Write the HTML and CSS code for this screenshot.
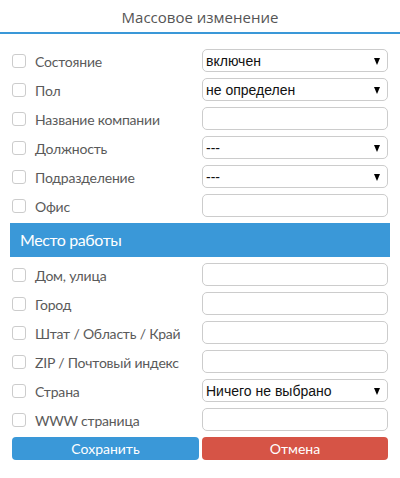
FILE: index.html
```html
<!DOCTYPE html>
<html lang="ru">
<head>
  <meta charset="UTF-8">
  <title>Массовое изменение</title>
  <link rel="stylesheet" href="styles.css">
</head>
<body>
  <h2 class="title">Массовое изменение</h2>

  <form class="form">
    <div class="row">
      <label class="lbl"><span class="check"></span>Состояние</label>
      <div class="sel"><select><option>включен</option></select></div>
    </div>
    <div class="row">
      <label class="lbl"><span class="check"></span>Пол</label>
      <div class="sel"><select><option>не определен</option></select></div>
    </div>
    <div class="row">
      <label class="lbl"><span class="check"></span>Название компании</label>
      <input class="txt" type="text">
    </div>
    <div class="row">
      <label class="lbl"><span class="check"></span>Должность</label>
      <div class="sel"><select><option>---</option></select></div>
    </div>
    <div class="row">
      <label class="lbl"><span class="check"></span>Подразделение</label>
      <div class="sel"><select><option>---</option></select></div>
    </div>
    <div class="row">
      <label class="lbl"><span class="check"></span>Офис</label>
      <input class="txt" type="text">
    </div>

    <h3 class="section">Место работы</h3>

    <div class="row">
      <label class="lbl"><span class="check"></span>Дом, улица</label>
      <input class="txt" type="text">
    </div>
    <div class="row">
      <label class="lbl"><span class="check"></span>Город</label>
      <input class="txt" type="text">
    </div>
    <div class="row">
      <label class="lbl"><span class="check"></span>Штат / Область / Край</label>
      <input class="txt" type="text">
    </div>
    <div class="row">
      <label class="lbl"><span class="check"></span>ZIP / Почтовый индекс</label>
      <input class="txt" type="text">
    </div>
    <div class="row">
      <label class="lbl"><span class="check"></span>Страна</label>
      <div class="sel"><select><option>Ничего не выбрано</option></select></div>
    </div>
    <div class="row">
      <label class="lbl"><span class="check"></span>WWW страница</label>
      <input class="txt" type="text">
    </div>

    <div class="buttons">
      <button type="button" class="btn save">Сохранить</button>
      <button type="button" class="btn cancel">Отмена</button>
    </div>
  </form>
</body>
</html>
```

FILE: styles.css
```css
body { margin: 0; background: #fff; font-family: Lato, "Open Sans", sans-serif; color: #555; }
.title { margin: 0; height: 32px; line-height: 35px; text-align: center; font-family: "Open Sans", sans-serif; font-size: 15px; font-weight: normal; color: #555; border-bottom: 2px solid #3a98d8; }
.form { padding: 15px 12px 0 12px; }
.row { display: grid; grid-template-columns: 190px 186px; height: 22px; margin-bottom: 7px; align-items: center; }
.lbl { display: flex; align-items: center; font-size: 14px; letter-spacing: -0.2px; color: #5a5a5a; white-space: nowrap; padding-top: 2px; }
.check { width: 12px; height: 12px; border: 1px solid #ccc; border-radius: 3px; margin: -1px 9px 0 0; background: #fff; }
.txt, .sel select { box-sizing: border-box; width: 186px; height: 23px; border: 1px solid #ccc; border-radius: 5px; background: #fff; margin: 0; }
.sel { position: relative; }
.sel select { appearance: none; -webkit-appearance: none; padding: 0 0 0 3px; font-family: "Liberation Sans", Arial, sans-serif; font-size: 14px; color: #111; }
.sel::after { content: ""; position: absolute; right: 8px; top: 9px; border-left: 3.5px solid transparent; border-right: 3.5px solid transparent; border-top: 7px solid #000; pointer-events: none; }
.section { margin: 0 -2px 6px -2px; height: 34px; line-height: 34px; background: #3a98d8; color: #fff; font-size: 16px; letter-spacing: -0.4px; font-weight: normal; padding-left: 10px; }
.buttons { display: grid; grid-template-columns: 187px 186px; column-gap: 3px; margin-top: 4px; }
.btn { height: 23px; border: none; border-radius: 4px; color: #fff; font-family: Lato, "Open Sans", sans-serif; font-size: 14px; padding: 0; }
.save { background: #3a98d8; }
.cancel { background: #d65446; }
```
